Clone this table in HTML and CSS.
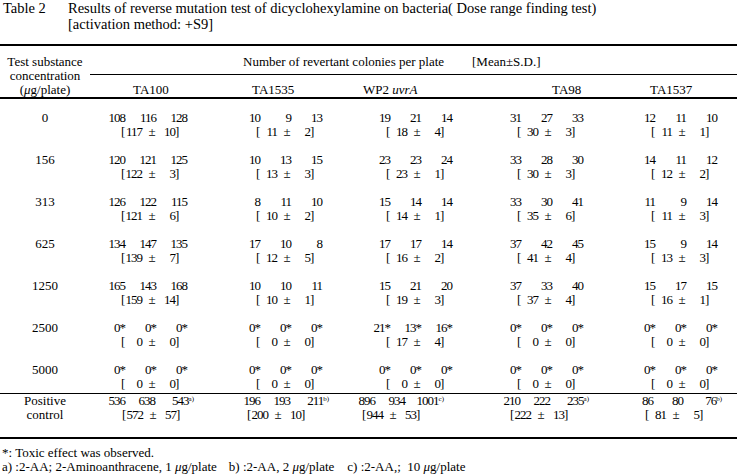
FILE: index.html
```html
<!DOCTYPE html>
<html>
<head>
<meta charset="utf-8">
<link rel="stylesheet" href="styles.css">
</head>
<body>
<div class="title">
  <div class="title-label">Table 2</div>
  <div class="title-text">Results of reverse mutation test of dicyclohexylamine on bacteria( Dose range finding test)<br>[activation method: +S9]</div>
</div>
<div class="table">
  <div class="cols head">
    <div class="head-conc">Test substance<br>concentration<br>(<i>μ</i>g/plate)</div>
    <div class="head-group"><span class="group-title">Number of revertant colonies per plate</span><span>[Mean±S.D.]</span></div>
    <div class="strain">TA100</div>
    <div class="strain">TA1535</div>
    <div class="strain">WP2 <i>uvrA</i></div>
    <div class="strain">TA98</div>
    <div class="strain">TA1537</div>
  </div>

  <div class="cols row">
    <div class="conc">0</div>
    <div class="val"><div class="nums"><span>108</span><span>116</span><span>128</span></div><div class="mean"><span class="b">[</span><span class="m">117</span><span class="pm">±</span><span class="sd">10</span><span class="b">]</span></div></div>
    <div class="val"><div class="nums"><span>10</span><span>9</span><span>13</span></div><div class="mean"><span class="b">[</span><span class="m">11</span><span class="pm">±</span><span class="sd">2</span><span class="b">]</span></div></div>
    <div class="val"><div class="nums"><span>19</span><span>21</span><span>14</span></div><div class="mean"><span class="b">[</span><span class="m">18</span><span class="pm">±</span><span class="sd">4</span><span class="b">]</span></div></div>
    <div class="val"><div class="nums"><span>31</span><span>27</span><span>33</span></div><div class="mean"><span class="b">[</span><span class="m">30</span><span class="pm">±</span><span class="sd">3</span><span class="b">]</span></div></div>
    <div class="val"><div class="nums"><span>12</span><span>11</span><span>10</span></div><div class="mean"><span class="b">[</span><span class="m">11</span><span class="pm">±</span><span class="sd">1</span><span class="b">]</span></div></div>
  </div>

  <div class="cols row">
    <div class="conc">156</div>
    <div class="val"><div class="nums"><span>120</span><span>121</span><span>125</span></div><div class="mean"><span class="b">[</span><span class="m">122</span><span class="pm">±</span><span class="sd">3</span><span class="b">]</span></div></div>
    <div class="val"><div class="nums"><span>10</span><span>13</span><span>15</span></div><div class="mean"><span class="b">[</span><span class="m">13</span><span class="pm">±</span><span class="sd">3</span><span class="b">]</span></div></div>
    <div class="val"><div class="nums"><span>23</span><span>23</span><span>24</span></div><div class="mean"><span class="b">[</span><span class="m">23</span><span class="pm">±</span><span class="sd">1</span><span class="b">]</span></div></div>
    <div class="val"><div class="nums"><span>33</span><span>28</span><span>30</span></div><div class="mean"><span class="b">[</span><span class="m">30</span><span class="pm">±</span><span class="sd">3</span><span class="b">]</span></div></div>
    <div class="val"><div class="nums"><span>14</span><span>11</span><span>12</span></div><div class="mean"><span class="b">[</span><span class="m">12</span><span class="pm">±</span><span class="sd">2</span><span class="b">]</span></div></div>
  </div>

  <div class="cols row">
    <div class="conc">313</div>
    <div class="val"><div class="nums"><span>126</span><span>122</span><span>115</span></div><div class="mean"><span class="b">[</span><span class="m">121</span><span class="pm">±</span><span class="sd">6</span><span class="b">]</span></div></div>
    <div class="val"><div class="nums"><span>8</span><span>11</span><span>10</span></div><div class="mean"><span class="b">[</span><span class="m">10</span><span class="pm">±</span><span class="sd">2</span><span class="b">]</span></div></div>
    <div class="val"><div class="nums"><span>15</span><span>14</span><span>14</span></div><div class="mean"><span class="b">[</span><span class="m">14</span><span class="pm">±</span><span class="sd">1</span><span class="b">]</span></div></div>
    <div class="val"><div class="nums"><span>33</span><span>30</span><span>41</span></div><div class="mean"><span class="b">[</span><span class="m">35</span><span class="pm">±</span><span class="sd">6</span><span class="b">]</span></div></div>
    <div class="val"><div class="nums"><span>11</span><span>9</span><span>14</span></div><div class="mean"><span class="b">[</span><span class="m">11</span><span class="pm">±</span><span class="sd">3</span><span class="b">]</span></div></div>
  </div>

  <div class="cols row">
    <div class="conc">625</div>
    <div class="val"><div class="nums"><span>134</span><span>147</span><span>135</span></div><div class="mean"><span class="b">[</span><span class="m">139</span><span class="pm">±</span><span class="sd">7</span><span class="b">]</span></div></div>
    <div class="val"><div class="nums"><span>17</span><span>10</span><span>8</span></div><div class="mean"><span class="b">[</span><span class="m">12</span><span class="pm">±</span><span class="sd">5</span><span class="b">]</span></div></div>
    <div class="val"><div class="nums"><span>17</span><span>17</span><span>14</span></div><div class="mean"><span class="b">[</span><span class="m">16</span><span class="pm">±</span><span class="sd">2</span><span class="b">]</span></div></div>
    <div class="val"><div class="nums"><span>37</span><span>42</span><span>45</span></div><div class="mean"><span class="b">[</span><span class="m">41</span><span class="pm">±</span><span class="sd">4</span><span class="b">]</span></div></div>
    <div class="val"><div class="nums"><span>15</span><span>9</span><span>14</span></div><div class="mean"><span class="b">[</span><span class="m">13</span><span class="pm">±</span><span class="sd">3</span><span class="b">]</span></div></div>
  </div>

  <div class="cols row">
    <div class="conc">1250</div>
    <div class="val"><div class="nums"><span>165</span><span>143</span><span>168</span></div><div class="mean"><span class="b">[</span><span class="m">159</span><span class="pm">±</span><span class="sd">14</span><span class="b">]</span></div></div>
    <div class="val"><div class="nums"><span>10</span><span>10</span><span>11</span></div><div class="mean"><span class="b">[</span><span class="m">10</span><span class="pm">±</span><span class="sd">1</span><span class="b">]</span></div></div>
    <div class="val"><div class="nums"><span>15</span><span>21</span><span>20</span></div><div class="mean"><span class="b">[</span><span class="m">19</span><span class="pm">±</span><span class="sd">3</span><span class="b">]</span></div></div>
    <div class="val"><div class="nums"><span>37</span><span>33</span><span>40</span></div><div class="mean"><span class="b">[</span><span class="m">37</span><span class="pm">±</span><span class="sd">4</span><span class="b">]</span></div></div>
    <div class="val"><div class="nums"><span>15</span><span>17</span><span>15</span></div><div class="mean"><span class="b">[</span><span class="m">16</span><span class="pm">±</span><span class="sd">1</span><span class="b">]</span></div></div>
  </div>

  <div class="cols row">
    <div class="conc">2500</div>
    <div class="val"><div class="nums"><span>0*</span><span>0*</span><span>0*</span></div><div class="mean"><span class="b">[</span><span class="m">0</span><span class="pm">±</span><span class="sd">0</span><span class="b">]</span></div></div>
    <div class="val"><div class="nums"><span>0*</span><span>0*</span><span>0*</span></div><div class="mean"><span class="b">[</span><span class="m">0</span><span class="pm">±</span><span class="sd">0</span><span class="b">]</span></div></div>
    <div class="val"><div class="nums"><span>21*</span><span>13*</span><span>16*</span></div><div class="mean"><span class="b">[</span><span class="m">17</span><span class="pm">±</span><span class="sd">4</span><span class="b">]</span></div></div>
    <div class="val"><div class="nums"><span>0*</span><span>0*</span><span>0*</span></div><div class="mean"><span class="b">[</span><span class="m">0</span><span class="pm">±</span><span class="sd">0</span><span class="b">]</span></div></div>
    <div class="val"><div class="nums"><span>0*</span><span>0*</span><span>0*</span></div><div class="mean"><span class="b">[</span><span class="m">0</span><span class="pm">±</span><span class="sd">0</span><span class="b">]</span></div></div>
  </div>

  <div class="cols row">
    <div class="conc">5000</div>
    <div class="val"><div class="nums"><span>0*</span><span>0*</span><span>0*</span></div><div class="mean"><span class="b">[</span><span class="m">0</span><span class="pm">±</span><span class="sd">0</span><span class="b">]</span></div></div>
    <div class="val"><div class="nums"><span>0*</span><span>0*</span><span>0*</span></div><div class="mean"><span class="b">[</span><span class="m">0</span><span class="pm">±</span><span class="sd">0</span><span class="b">]</span></div></div>
    <div class="val"><div class="nums"><span>0*</span><span>0*</span><span>0*</span></div><div class="mean"><span class="b">[</span><span class="m">0</span><span class="pm">±</span><span class="sd">0</span><span class="b">]</span></div></div>
    <div class="val"><div class="nums"><span>0*</span><span>0*</span><span>0*</span></div><div class="mean"><span class="b">[</span><span class="m">0</span><span class="pm">±</span><span class="sd">0</span><span class="b">]</span></div></div>
    <div class="val"><div class="nums"><span>0*</span><span>0*</span><span>0*</span></div><div class="mean"><span class="b">[</span><span class="m">0</span><span class="pm">±</span><span class="sd">0</span><span class="b">]</span></div></div>
  </div>

  <div class="cols row pc">
    <div class="conc">Positive<br>control</div>
    <div class="val"><div class="nums"><span>536</span><span>638</span><span>543<sup class="fn">a)</sup></span></div><div class="mean"><span class="b">[</span><span class="m">572</span><span class="pm">±</span><span class="sd">57</span><span class="b">]</span></div></div>
    <div class="val"><div class="nums"><span>196</span><span>193</span><span>211<sup class="fn">b)</sup></span></div><div class="mean"><span class="b">[</span><span class="m">200</span><span class="pm">±</span><span class="sd">10</span><span class="b">]</span></div></div>
    <div class="val"><div class="nums"><span>896</span><span>934</span><span>1001<sup class="fn">c)</sup></span></div><div class="mean"><span class="b">[</span><span class="m">944</span><span class="pm">±</span><span class="sd">53</span><span class="b">]</span></div></div>
    <div class="val"><div class="nums"><span>210</span><span>222</span><span>235<sup class="fn">a)</sup></span></div><div class="mean"><span class="b">[</span><span class="m">222</span><span class="pm">±</span><span class="sd">13</span><span class="b">]</span></div></div>
    <div class="val"><div class="nums"><span>86</span><span>80</span><span>76<sup class="fn">b)</sup></span></div><div class="mean"><span class="b">[</span><span class="m">81</span><span class="pm">±</span><span class="sd">5</span><span class="b">]</span></div></div>
  </div>
</div>
<div class="notes">
  <div>*: Toxic effect was observed.</div>
  <div class="note-line"><span>a) :2-AA; 2-Aminoanthracene, 1 <i>μ</i>g/plate</span><span class="note-b">b) :2-AA, 2 <i>μ</i>g/plate</span><span class="note-c">c) :2-AA,;&nbsp; 10 <i>μ</i>g/plate</span></div>
</div>
</body>
</html>
```

FILE: styles.css
```css
body {
  margin: 0;
  background: #fff;
  color: #000;
  font-family: "Liberation Serif", "Times New Roman", serif;
  font-size: 13px;
  width: 737px;
}

.title {
  display: flex;
  font-size: 14.5px;
  line-height: 16px;
  height: 44px;
}

.title-label {
  flex: none;
  width: 65px;
  padding-left: 3px;
}

.table {
  border-top: 2px solid #000;
  border-bottom: 2px solid #000;
}

.cols {
  display: grid;
  grid-template-columns: 90px 125px 130px 130px 130px 132px;
  line-height: 14px;
}

.head {
  grid-template-rows: 29px 22px;
  border-bottom: 2px solid #000;
}

.head-conc {
  grid-row: 1 / 3;
  text-align: center;
  padding-top: 9px;
}

.head-group {
  grid-column: 2 / 7;
  display: flex;
  padding-top: 9px;
  padding-left: 153px;
  border-bottom: 1px solid #000;
}

.group-title {
  width: 229px;
}

.strain {
  padding-top: 8px;
}

.head > .strain:nth-child(3) { padding-left: 43px; }
.head > .strain:nth-child(4) { padding-left: 37px; }
.head > .strain:nth-child(5) { padding-left: 18px; }
.head > .strain:nth-child(6) { padding-left: 77px; }
.head > .strain:nth-child(7) { padding-left: 45px; }

.row {
  height: 42px;
  box-sizing: border-box;
  padding-top: 12px;
}

.conc {
  text-align: center;
}

.nums {
  display: flex;
}

.nums span {
  width: 31px;
  flex: none;
  text-align: right;
  letter-spacing: -1px;
}

.mean {
  display: flex;
  margin-left: 27px;
}

.mean span {
  flex: none;
  letter-spacing: -1px;
}

.mean .b { width: 4px; letter-spacing: 0; }
.mean .m { width: 17px; text-align: right; }
.mean .pm { width: 20px; text-align: center; letter-spacing: 0; }
.mean .sd { width: 13px; text-align: right; }

.row > .val:nth-child(2) { padding-left: 4px; }
.row > .val:nth-child(3) { padding-left: 14px; }
.row > .val:nth-child(4) { padding-left: 14px; }
.row > .val:nth-child(5) { padding-left: 15px; }
.row > .val:nth-child(6) { padding-left: 19px; }

.row.pc {
  height: 44px;
  padding-top: 0;
  border-top: 1px solid #000;
}

.pc .nums span { width: 30px; }

.row.pc > .val:nth-child(2) { padding-left: 5px; }
.row.pc > .val:nth-child(3) { padding-left: 15px; }
.row.pc > .val:nth-child(4) { padding-left: 0; }
.row.pc > .val:nth-child(5) { padding-left: 15px; }
.row.pc > .val:nth-child(6) { padding-left: 18px; }

.pc > .val:nth-child(2) .mean { margin-left: 27px; }
.pc > .val:nth-child(3) .mean { margin-left: 17px; }
.pc > .val:nth-child(4) .mean { margin-left: 17px; }
.pc > .val:nth-child(5) .mean { margin-left: 20px; }
.pc > .val:nth-child(6) .mean { margin-left: 22px; }

.fn {
  font-size: 7px;
  line-height: 0;
  vertical-align: 4px;
  margin-right: -9px;
  letter-spacing: 0;
}

.notes {
  padding-top: 7px;
  padding-left: 2px;
  line-height: 14px;
}

.note-line {
  display: flex;
}

.note-b { margin-left: 12px; }
.note-c { margin-left: 13px; }
```
